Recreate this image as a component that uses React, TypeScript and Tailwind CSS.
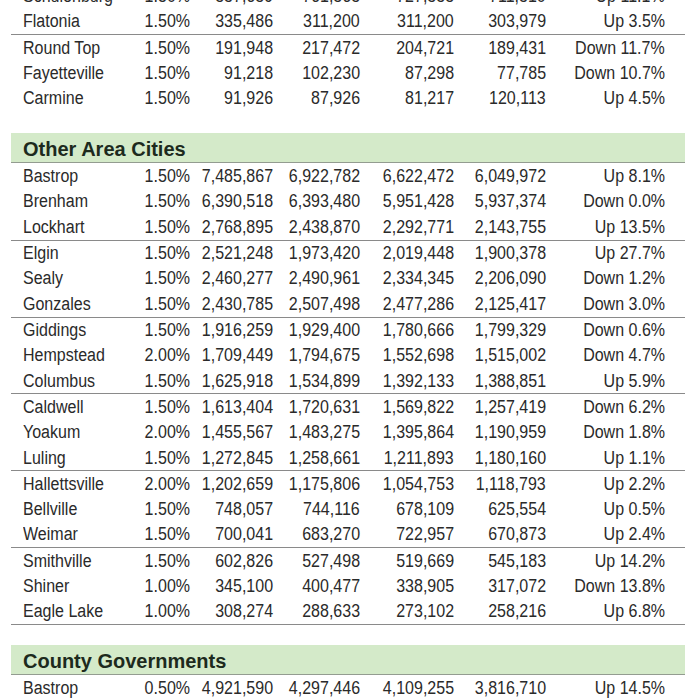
import React from "react";

type Row = [string, string, string, string, string, string, string];

const top: Row[][] = [
  [
    ["Schulenburg", "1.50%", "887,689", "761,868", "727,888", "711,810", "Up 11.1%"],
    ["Flatonia", "1.50%", "335,486", "311,200", "311,200", "303,979", "Up 3.5%"],
  ],
  [
    ["Round Top", "1.50%", "191,948", "217,472", "204,721", "189,431", "Down 11.7%"],
    ["Fayetteville", "1.50%", "91,218", "102,230", "87,298", "77,785", "Down 10.7%"],
    ["Carmine", "1.50%", "91,926", "87,926", "81,217", "120,113", "Up 4.5%"],
  ],
];

const other: Row[][] = [
  [
    ["Bastrop", "1.50%", "7,485,867", "6,922,782", "6,622,472", "6,049,972", "Up 8.1%"],
    ["Brenham", "1.50%", "6,390,518", "6,393,480", "5,951,428", "5,937,374", "Down 0.0%"],
    ["Lockhart", "1.50%", "2,768,895", "2,438,870", "2,292,771", "2,143,755", "Up 13.5%"],
  ],
  [
    ["Elgin", "1.50%", "2,521,248", "1,973,420", "2,019,448", "1,900,378", "Up 27.7%"],
    ["Sealy", "1.50%", "2,460,277", "2,490,961", "2,334,345", "2,206,090", "Down 1.2%"],
    ["Gonzales", "1.50%", "2,430,785", "2,507,498", "2,477,286", "2,125,417", "Down 3.0%"],
  ],
  [
    ["Giddings", "1.50%", "1,916,259", "1,929,400", "1,780,666", "1,799,329", "Down 0.6%"],
    ["Hempstead", "2.00%", "1,709,449", "1,794,675", "1,552,698", "1,515,002", "Down 4.7%"],
    ["Columbus", "1.50%", "1,625,918", "1,534,899", "1,392,133", "1,388,851", "Up 5.9%"],
  ],
  [
    ["Caldwell", "1.50%", "1,613,404", "1,720,631", "1,569,822", "1,257,419", "Down 6.2%"],
    ["Yoakum", "2.00%", "1,455,567", "1,483,275", "1,395,864", "1,190,959", "Down 1.8%"],
    ["Luling", "1.50%", "1,272,845", "1,258,661", "1,211,893", "1,180,160", "Up 1.1%"],
  ],
  [
    ["Hallettsville", "2.00%", "1,202,659", "1,175,806", "1,054,753", "1,118,793", "Up 2.2%"],
    ["Bellville", "1.50%", "748,057", "744,116", "678,109", "625,554", "Up 0.5%"],
    ["Weimar", "1.50%", "700,041", "683,270", "722,957", "670,873", "Up 2.4%"],
  ],
  [
    ["Smithville", "1.50%", "602,826", "527,498", "519,669", "545,183", "Up 14.2%"],
    ["Shiner", "1.00%", "345,100", "400,477", "338,905", "317,072", "Down 13.8%"],
    ["Eagle Lake", "1.00%", "308,274", "288,633", "273,102", "258,216", "Up 6.8%"],
  ],
];

const county: Row[] = [
  ["Bastrop", "0.50%", "4,921,590", "4,297,446", "4,109,255", "3,816,710", "Up 14.5%"],
];

const widths = ["w-[64px]", "w-[83px]", "w-[87px]", "w-[94px]", "w-[92px]", "w-[119px]"];

function DataRow({ r, border }: { r: Row; border?: boolean }) {
  return (
    <div
      className={
        "flex h-[25.65px] items-center whitespace-nowrap text-[18px] leading-none text-[#2a2a2a] " +
        (border ? "border-t border-[#8a8a8a]" : "")
      }
    >
      <div className="w-[115px] pl-[12px]">
        <span className="inline-block origin-left scale-x-[0.89]">{r[0]}</span>
      </div>
      {r.slice(1).map((v, i) => (
        <div key={i} className={widths[i] + " text-right"}>
          <span className="inline-block origin-right scale-x-[0.89]">{v}</span>
        </div>
      ))}
    </div>
  );
}

function Header({ title }: { title: string }) {
  return (
    <div className="flex h-[29.5px] items-center border-b border-[#939c90] bg-[#d4eac9] pl-[12px] pt-[4px]">
      <span className="inline-block text-[20px] font-bold leading-none text-[#1d2a1d]">
        {title}
      </span>
    </div>
  );
}

export default function App() {
  return (
    <div
      className="h-[700px] w-[700px] overflow-hidden bg-white"
      style={{ fontFamily: '"Liberation Sans", Arial, sans-serif' }}
    >
      <div className="ml-[11px] mt-[-17px] w-[674px]">
        {top.map((g, gi) => (
          <div key={gi}>
            {g.map((r, ri) => (
              <DataRow key={ri} r={r} border={gi > 0 && ri === 0} />
            ))}
          </div>
        ))}
        <div className="h-[22px]" />
        <Header title="Other Area Cities" />
        {other.map((g, gi) => (
          <div key={gi}>
            {g.map((r, ri) => (
              <DataRow key={ri} r={r} border={gi > 0 && ri === 0} />
            ))}
          </div>
        ))}
        <div className="border-t border-[#8a8a8a]" />
        <div className="h-[20px]" />
        <Header title="County Governments" />
        {county.map((r, ri) => (
          <DataRow key={ri} r={r} />
        ))}
      </div>
    </div>
  );
}
